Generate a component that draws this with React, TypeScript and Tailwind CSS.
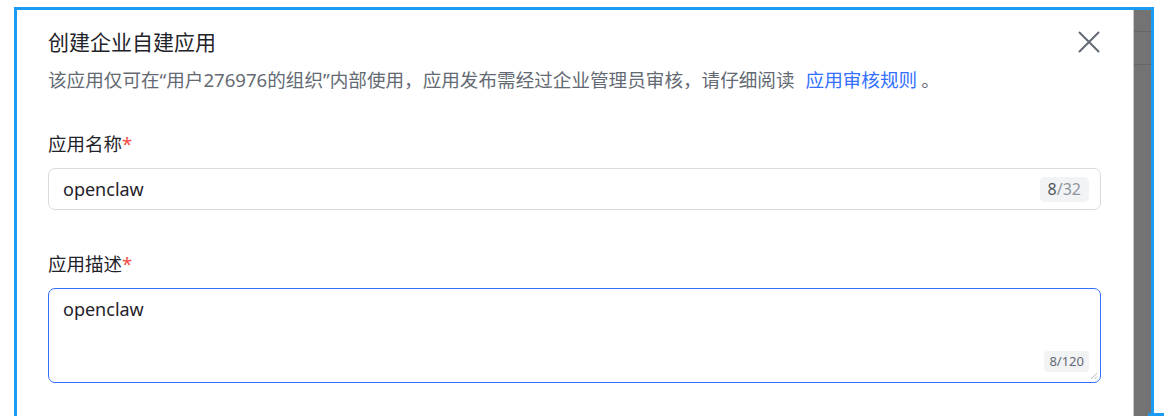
import React from "react";

const FONT = '"Noto Sans", "Noto Sans CJK SC", sans-serif';

export default function App() {
  return (
    <div
      className="relative w-[1164px] h-[416px] bg-white overflow-hidden"
      style={{ fontFamily: FONT }}
    >
      <div className="ml-[14px] mt-[7px] w-[1140px] h-[409px] border-l-[3px] border-t-[3px] border-r-[3px] border-[#1b9cf2] flex">
        {/* dialog content */}
        <div className="w-[1116px] h-full bg-white pl-[31px] pr-[32px] pt-[17px] flex flex-col">
          <div className="flex items-center justify-between h-[30px]">
            <div className="text-[21px] leading-[30px] text-[#1f2329]">创建企业自建应用</div>
            <svg width="22" height="22" viewBox="0 0 22 22" className="mr-[1px]">
              <path d="M1.5 1.5 L20.5 20.5 M20.5 1.5 L1.5 20.5" stroke="#646a73" strokeWidth="2" strokeLinecap="round" fill="none" />
            </svg>
          </div>
          <div className="mt-[10px] text-[18.6px] leading-[26px] text-[#646a73] whitespace-nowrap">
            该应用仅可在“用户276976的组织”内部使用，应用发布需经过企业管理员审核，请仔细阅读
            <span className="text-[#3370ff] ml-[11px] mr-[4px]">应用审核规则</span>。
          </div>

          <div className="mt-[38px] text-[18.5px] leading-[26px] text-[#1f2329]">
            应用名称<span className="text-[#f54a45]">*</span>
          </div>
          <div className="mt-[11px] h-[42px] rounded-[7px] border border-[#d9dbde] flex items-center justify-between pl-[14px] pr-[11px]">
            <span className="text-[18px] text-[#1f2329]">openclaw</span>
            <span className="h-[25px] px-[8px] rounded-[5px] bg-[#f2f3f5] text-[16px] leading-[25px]">
              <span className="text-[#51565d]">8</span>
              <span className="text-[#8f959e]">/32</span>
            </span>
          </div>

          <div className="mt-[41px] text-[18.5px] leading-[26px] text-[#1f2329]">
            应用描述<span className="text-[#f54a45]">*</span>
          </div>
          <div className="relative mt-[11px] h-[95px] rounded-[7px] border-[1.5px] border-[#3370ff] pl-[14px] pt-[7px]">
            <span className="text-[18px] leading-[26px] text-[#1f2329]">openclaw</span>
            <span className="absolute right-[11px] bottom-[10px] h-[21px] px-[5px] rounded-[4px] bg-[#f2f3f5] text-[13px] leading-[21px] text-[#646a73]">
              8/120
            </span>
            <svg width="8" height="8" viewBox="0 0 8 8" className="absolute right-[2px] bottom-[2px]">
              <path d="M7 1 L1 7 M7 4.5 L4.5 7" stroke="#b8bcc2" strokeWidth="1" fill="none" />
            </svg>
          </div>
        </div>
        {/* divider + gray strip */}
        <div className="w-px h-full bg-[#c8c8c8]" />
        <div className="w-[17px] h-full bg-[#737373] flex flex-col">
          <div className="h-[21px]" />
          <div className="h-px bg-[#666666]" />
          <div className="h-[32px]" />
          <div className="h-px bg-[#666666]" />
        </div>
      </div>
      <div className="absolute left-[1148px] top-[413px] w-[16px] h-[3px] bg-[#1b9cf2]" />
    </div>
  );
}
